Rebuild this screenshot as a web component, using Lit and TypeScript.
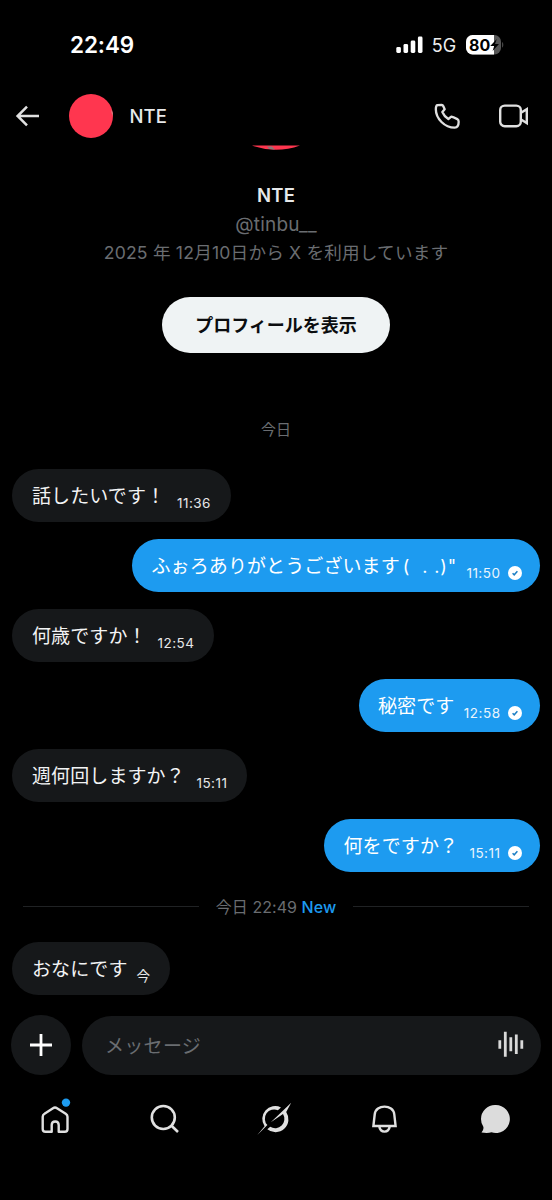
import { LitElement, html, css } from "lit";
import { customElement, property } from "lit/decorators.js";

interface Message {
  text: string;
  time: string;
  width: number;
  mine?: boolean;
  latin?: string;
}

const earlier: Message[] = [
  { text: "話したいです！", time: "11:36", width: 218.5 },
  { text: "ふぉろありがとうございます", latin: "(  . .)\"", time: "11:50", width: 408, mine: true },
  { text: "何歳ですか！", time: "12:54", width: 202 },
  { text: "秘密です", time: "12:58", width: 181.5, mine: true },
  { text: "週何回しますか？", time: "15:11", width: 235 },
  { text: "何をですか？", time: "15:11", width: 216, mine: true },
];

@customElement("chat-bubble")
export class ChatBubble extends LitElement {
  @property({ attribute: false }) message!: Message;

  static styles = css`
    :host { display: flex; height: 53px; }
    .bubble {
      box-sizing: border-box; height: 53px; border-radius: 26.5px; background: #16181a; color: #f2f3f4;
      display: flex; align-items: flex-start; justify-content: space-between;
      padding: 0 19.5px 0 20px; white-space: pre;
    }
    .mine { background: #1d9bf0; color: #fff; margin-left: auto; padding: 0 18px 0 19.5px; }
    .text { font-family: Inter, "Noto Sans CJK JP", sans-serif; font-size: 19px; letter-spacing: 0.1px; line-height: 55px; width: 0; }
    .latin { font-size: 18px; letter-spacing: 0.9px; padding-left: 3px; }
    .meta { display: flex; align-items: center; gap: 7.5px; font: 400 13.5px/16px Inter, "Noto Sans CJK JP", sans-serif; letter-spacing: 0.5px; margin-top: 26px; color: #e6e7e8; }
    .mine .meta { color: #eaf5fd; }
    .tick { display: block; }
  `;

  render() {
    const m = this.message;
    return html`<div class="bubble ${m.mine ? "mine" : ""}" style="width:${m.width}px">
      <span class="text">${m.text}${m.latin ? html`<span class="latin">${m.latin}</span>` : ""}</span>
      <span class="meta">${m.time}${m.mine
        ? html`<svg class="tick" width="14" height="14" viewBox="0 0 14 14"><circle cx="7" cy="7" r="7" fill="#fff"/><path d="M4.6 7.2 6.2 8.8 9.4 5.3" fill="none" stroke="#1d7fc4" stroke-width="1.5"/></svg>`
        : ""}</span>
    </div>`;
  }
}

@customElement("app-root")
export class AppRoot extends LitElement {
  static styles = css`
    :host {
      display: flex; flex-direction: column; box-sizing: border-box; width: 552px; height: 1200px; overflow: hidden;
      background: #000; color: #e7e9ea; font-family: Inter, "Noto Sans CJK JP", sans-serif;
    }
    svg { display: block; flex: none; overflow: visible; }
    .status { display: flex; align-items: center; height: 90px; flex: none; padding: 0 48px 1px 70px; box-sizing: border-box; }
    .clock { font-size: 22.5px; font-weight: 600; letter-spacing: -0.1px; color: #fff; flex: 1; }
    .network { font-size: 18px; margin: 1px 10px 0 8px; letter-spacing: -0.1px; color: #eee; }
    .header { display: flex; align-items: center; height: 55px; flex: none; padding: 0 23px 4px 15px; box-sizing: border-box; }
    .avatar { margin: 0 16.5px 0 29px; }
    .name { font-size: 18.5px; font-weight: 500; letter-spacing: 0.1px; flex: 1; }
    .video { margin-left: 38.7px; }
    .profile { display: flex; flex-direction: column; align-items: center; height: 324px; flex: none; }
    .fullname { font-size: 18.5px; font-weight: 600; line-height: 30px; margin-top: 29.5px; letter-spacing: 0.2px; }
    .handle { font-size: 19px; letter-spacing: 0.2px; line-height: 29px; color: #6a6d71; }
    .joined { font-size: 17.6px; letter-spacing: 0.2px; line-height: 28px; color: #6a6d71; white-space: nowrap; }
    .show { width: 228px; height: 56px; border-radius: 28px; background: #eff3f4; color: #0b0d0f; font-weight: 700; font-size: 18px; line-height: 57px; text-align: center; margin-top: 30.5px; }
    .day { font-size: 15px; line-height: 20px; color: #6a6d71; margin-top: 67px; }
    .messages { display: flex; flex-direction: column; gap: 17px; padding: 0 12px; }
    .divider { display: flex; align-items: center; gap: 17px; height: 69.5px; flex: none; padding: 0 23px; font-size: 16px; color: #6a6d71; }
    .label { line-height: 20px; letter-spacing: 0.05px; padding-top: 1px; }
    .line { height: 1px; background: #202224; flex: 1; }
    .new { color: #1d9bf0; font-weight: 500; }
    .composer { display: flex; align-items: center; gap: 11px; padding: 19px 11px 0; height: 62px; flex: none; }
    .plus { width: 60px; height: 60px; border-radius: 50%; background: #16181a; display: grid; place-items: center; }
    .field { flex: 1; height: 59px; margin-top: 1px; border-radius: 30px; background: #16181a; display: flex; align-items: center; justify-content: space-between; padding: 0 17px 0 23px; font-size: 19px; letter-spacing: 0.3px; color: #6a6d71; }
    .placeholder { margin-top: -2px; }
    .tabs { display: flex; justify-content: space-between; padding: 24px 40px 0; }
  `;

  render() {
    return html`
      <div class="status">
        <span class="clock">22:49</span>
        <svg width="28" height="18" viewBox="0.7 0 28 18" fill="#fff"><rect x="1" y="11" width="4.6" height="6" rx="1.4"/><rect x="8.2" y="8" width="4.6" height="9" rx="1.4"/><rect x="15.4" y="4.5" width="4.6" height="12.5" rx="1.4"/><rect x="22.6" y="0.5" width="4.6" height="16.5" rx="1.4"/></svg>
        <span class="network">5G</span>
        <svg width="38" height="20" viewBox="0 0 38 20"><defs><clipPath id="cell"><rect width="35" height="19.5" rx="6.5"/></clipPath></defs><g clip-path="url(#cell)"><rect width="38" height="20" fill="#555"/><rect width="28" height="20" fill="#fff"/></g><path d="M36.2 7c1.4.6 1.4 5 0 5.6z" fill="#555"/><text x="3" y="15.6" font-family="Inter" font-size="16" font-weight="700" fill="#000">80</text><path d="M30.8 4 24.2 10.9h4L26.6 16l6.4-7h-4z" fill="#000"/></svg>
      </div>
      <div class="header">
        <svg width="25" height="22" viewBox="0 0 25 22" fill="none" stroke="#e0e0e0" stroke-width="2.5"><path d="M2.5 11H24M12 1.6 2.6 11l9.4 9.4"/></svg>
        <svg class="avatar" width="44" height="44" viewBox="0 0 44 44"><circle cx="22" cy="22" r="22" fill="#ff364f"/><path d="M42.4 15.5Q44.2 19 43.8 22 42.3 20 42.4 15.5Z" fill="#c99a94"/></svg>
        <span class="name">NTE</span>
        <svg width="26" height="26" viewBox="13 21 78 78" fill="none" stroke="#e0e0e0" stroke-width="7" stroke-linejoin="round"><path d="M23 27.5 36 26.5Q39.5 26.5 41 31L45 40 38 48Q44 62 56 69L65 62Q70 63 83 69.500Q87 71.500 87 77Q87 94 75 95C45 95 18.500 68 18.500 40Q18.500 29 23 27.500Z"/></svg>
        <svg class="video" width="30" height="24" viewBox="0 0 30 24" fill="none" stroke="#e0e0e0" stroke-width="2.4"><rect x="1.2" y="1.6" width="20.6" height="20.6" rx="4.5"/><path d="M22 8.8 27.8 5.2v13.8l-5.800-3.600"/></svg>
      </div>
      <div class="profile">
        <svg width="50" height="5" viewBox="0 0 50 5"><path d="M1 .5H49Q37 4.800 25 4.800T1 .5Z" fill="#ff364f"/><path d="M16 1.500h5l3 3.200-6-.8z" fill="#8b7778"/></svg>
        <span class="fullname">NTE</span>
        <span class="handle">@tinbu__</span>
        <span class="joined">2025 年 12月10日から X を利用しています</span>
        <div class="show">プロフィールを表示</div>
        <span class="day">今日</span>
      </div>
      <div class="messages">${earlier.map((m) => html`<chat-bubble .message=${m}></chat-bubble>`)}</div>
      <div class="divider"><span class="line"></span><span class="label">今日 22:49 <span class="new">New</span></span><span class="line"></span></div>
      <div class="messages"><chat-bubble .message=${{ text: "おなにです", time: "今", width: 158 }}></chat-bubble></div>
      <div class="composer">
        <div class="plus"><svg width="24" height="24" viewBox="0 0 24 24" stroke="#fff" stroke-width="2.8"><path d="M12 1v22M1 12h22"/></svg></div>
        <div class="field"><span class="placeholder">メッセージ</span>
          <svg width="26" height="26" viewBox="0 0.8 26 26" stroke="#d9d9d9" stroke-width="2.8"><path d="M1.800 9v8.500M7.300.5v25M12.800 6v14M18.300 3.300v19.400M23.800 9v8.500"/></svg>
        </div>
      </div>
      <div class="tabs">
        <svg width="32" height="36" viewBox="0 0 32 36" fill="none" stroke="#e0e0e0" stroke-width="2.4" stroke-linejoin="round"><path d="M4.500 13.700 13 8.200q2-1.300 4 0l8.700 5.500q1.800 1.200 1.800 3V29q0 2.800-2.800 2.800H18.700V25q0-3.500-3.500-3.500T11.700 25v6.800H5.500Q2.700 31.800 2.700 29V16.700q0-2 1.800-3Z"/><circle cx="26" cy="2.600" r="4.200" fill="#1d9bf0" stroke="none"/></svg>
        <svg width="32" height="36" viewBox="0.500 0 32 36" fill="none" stroke="#e0e0e0" stroke-width="2.600"><circle cx="13.800" cy="17.500" r="11.500"/><path d="m21.500 25.200 7 6.800"/></svg>
        <svg width="34" height="36" viewBox="9 5.500 34 36" fill="#e0e0e0"><path d="M31 12.900A12.900 12.900 0 0 0 14.600 31.800L7.300 40.600 17.400 30.600A9.300 9.300 0 0 1 27.900 15.700ZM17.300 34.700A12.900 12.900 0 0 0 36.200 17.500L41.200 8.200 20.800 27.800 33 19.600A9.200 9.200 0 0 1 20.200 32.200Z"/></svg>
        <svg width="32" height="36" viewBox="2.500 0 32 36" fill="none" stroke="#e0e0e0" stroke-width="2.400"><path d="M4.900 26 6.200 14.500C7.200 4 24.800 4 25.800 14.500L27.100 26ZM10.800 26.500c1 6.800 9.400 6.800 10.400 0"/></svg>
        <svg width="32" height="36" viewBox="0.500 0 32 36" fill="#dcdcdc"><path d="M16 5a14 14 0 1 1-4 27.300Q8 33.500 2 32.500 5 29 3.500 26 1.500 23 1.500 19A14 14 0 0 1 16 5Z"/></svg>
      </div>`;
  }
}
